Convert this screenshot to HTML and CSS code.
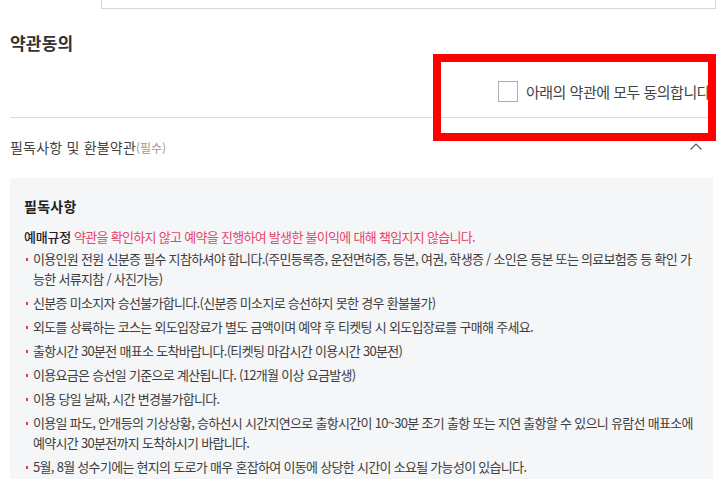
FILE: index.html
```html
<!DOCTYPE html>
<html lang="ko">
<head>
<meta charset="utf-8">
<title>약관동의</title>
<link rel="stylesheet" href="styles.css">
</head>
<body>
<div class="prev-box"></div>
<section class="terms">
  <h2 class="terms-title">약관동의</h2>
  <div class="agree-all">
    <label class="agree-label">
      <span class="checkbox"></span>
      <span class="agree-text">아래의 약관에 모두 동의합니다</span>
    </label>
  </div>
  <div class="acc-head">
    <span class="acc-title">필독사항 및 환불약관<span class="acc-sub">(필수)</span></span>
    <svg class="chevron" width="12" height="7" viewBox="0 0 12 7"><polyline points="0.5,6.5 6,1 11.5,6.5" fill="none" stroke="#555" stroke-width="1.1"/></svg>
  </div>
  <div class="acc-body">
    <h3 class="notice-title">필독사항</h3>
    <p class="rule"><strong class="rule-label">예매규정</strong> <span class="rule-warn">약관을 확인하지 않고 예약을 진행하여 발생한 불이익에 대해 책임지지 않습니다.</span></p>
    <ul class="notice-list">
      <li>이용인원 전원 신분증 필수 지참하셔야 합니다.(주민등록증, 운전면허증, 등본, 여권, 학생증 / 소인은 등본 또는 의료보험증 등 확인 가능한 서류지참 / 사진가능)</li>
      <li>신분증 미소지자 승선불가합니다.(신분증 미소지로 승선하지 못한 경우 환불불가)</li>
      <li>외도를 상륙하는 코스는 외도입장료가 별도 금액이며 예약 후 티켓팅 시 외도입장료를 구매해 주세요.</li>
      <li>출항시간 30분전 매표소 도착바랍니다.(티켓팅 마감시간 이용시간 30분전)</li>
      <li>이용요금은 승선일 기준으로 계산됩니다. (12개월 이상 요금발생)</li>
      <li>이용 당일 날짜, 시간 변경불가합니다.</li>
      <li>이용일 파도, 안개등의 기상상황, 승하선시 시간지연으로 출항시간이 10~30분 조기 출항 또는 지연 출항할 수 있으니 유람선 매표소에 예약시간 30분전까지 도착하시기 바랍니다.</li>
      <li>5월, 8월 성수기에는 현지의 도로가 매우 혼잡하여 이동에 상당한 시간이 소요될 가능성이 있습니다.</li>
    </ul>
  </div>
</section>
<div class="highlight"></div>
</body>
</html>
```

FILE: styles.css
```css
html, body {
  margin: 0;
  padding: 0;
  background: #fff;
}
body {
  font-family: "Noto Sans CJK KR", "Noto Sans", sans-serif;
  color: #3d3d3d;
  width: 723px;
  height: 479px;
  overflow: hidden;
  position: relative;
}
.prev-box {
  margin: -40px 7px 0 101px;
  height: 47px;
  border: 1px solid #d3d6db;
}
.terms {
  padding: 0 13px 0 10px;
}
.terms-title {
  margin: 22px 0 0;
  font-size: 17px;
  line-height: 24px;
  font-weight: 700;
  color: #333;
  letter-spacing: 0.2px;
}
.agree-all {
  display: flex;
  justify-content: flex-end;
  padding: 26px 0 15px;
  border-bottom: 1px solid #dcdcdc;
}
.agree-label {
  display: flex;
  align-items: center;
  gap: 8px;
}
.checkbox {
  width: 18px;
  height: 19px;
  border: 1px solid #aab0b8;
  background: #fff;
}
.agree-text {
  font-size: 15px;
  line-height: 21px;
  letter-spacing: -0.5px;
  color: #444;
}
.acc-head {
  display: flex;
  justify-content: space-between;
  align-items: center;
  padding: 19px 8px 20px 0;
}
.acc-title {
  font-size: 14px;
  line-height: 20px;
  letter-spacing: 0.2px;
  color: #444;
}
.acc-sub {
  font-size: 12px;
  color: #999;
  letter-spacing: 0;
}
.chevron {
  display: block;
  margin-top: -3px;
}
.acc-body {
  background: #f5f6f8;
  margin-right: -3px;
  padding: 18px 15px 20px 14px;
}
.notice-title {
  margin: 0;
  font-size: 14px;
  line-height: 20px;
  font-weight: 700;
  color: #222;
  letter-spacing: 0.3px;
}
.rule {
  margin: 11px 0 0;
  font-size: 13px;
  line-height: 20px;
  letter-spacing: -0.7px;
}
.rule-label {
  font-weight: 500;
  color: #222;
  letter-spacing: -0.2px;
}
.rule-warn {
  color: #e8436a;
}
.notice-list {
  list-style: none;
  margin: 2px 0 0;
  padding: 0;
}
.notice-list li {
  position: relative;
  padding-left: 9px;
  margin-top: 4px;
  font-size: 13px;
  line-height: 20px;
  letter-spacing: -0.7px;
  color: #3d3d3d;
}
.notice-list li:first-child {
  margin-top: 0;
}
.notice-list li::before {
  content: "";
  position: absolute;
  left: 2px;
  top: 9px;
  width: 2px;
  height: 3px;
  background: #e03a3e;
}
.highlight {
  position: absolute;
  left: 433px;
  top: 54px;
  width: 283px;
  height: 87px;
  border: 8px solid #ff0000;
  box-sizing: border-box;
}
```
